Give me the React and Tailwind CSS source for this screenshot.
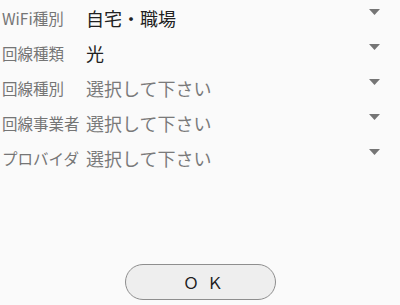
import React from "react";

const rows = [
  { label: "WiFi種別", value: "自宅・職場", selected: true },
  { label: "回線種類", value: "光", selected: true },
  { label: "回線種別", value: "選択して下さい", selected: false },
  { label: "回線事業者", value: "選択して下さい", selected: false },
  { label: "プロバイダ", value: "選択して下さい", selected: false },
];

const Caret = () => (
  <svg width="11" height="6" viewBox="0 0 11 6" className="block">
    <path d="M0 0 H11 L5.5 6 Z" fill="#757575" />
  </svg>
);

const App = () => {
  return (
    <div
      className="w-[400px] h-[305px] bg-[#fafafa] flex flex-col pt-[1px]"
      style={{ fontFamily: '"Noto Sans CJK JP", "Noto Sans", sans-serif' }}
    >
      {rows.map((row) => (
        <div key={row.label} className="flex h-[35px] items-center">
          <div className="w-[86px] pl-[2px] text-[15.5px] text-[#757575] whitespace-nowrap">
            {row.label}
          </div>
          <div
            className={
              "flex-1 text-[18px] whitespace-nowrap " +
              (row.selected ? "text-[#212121]" : "text-[#7a7a7a]")
            }
          >
            {row.value}
          </div>
          <div className="self-start mt-[8px] mr-[20px]">
            <Caret />
          </div>
        </div>
      ))}

      <div className="flex justify-center mt-[88px]">
        <button
          type="button"
          className="w-[151px] h-[36px] rounded-full border border-[#8e8e8e] bg-[#eeeeee] text-[16px] text-[#212121] flex items-center justify-center gap-[8px] pl-[6px]"
        >
          <span>Ｏ</span>
          <span>Ｋ</span>
        </button>
      </div>
    </div>
  );
};

export default App;
